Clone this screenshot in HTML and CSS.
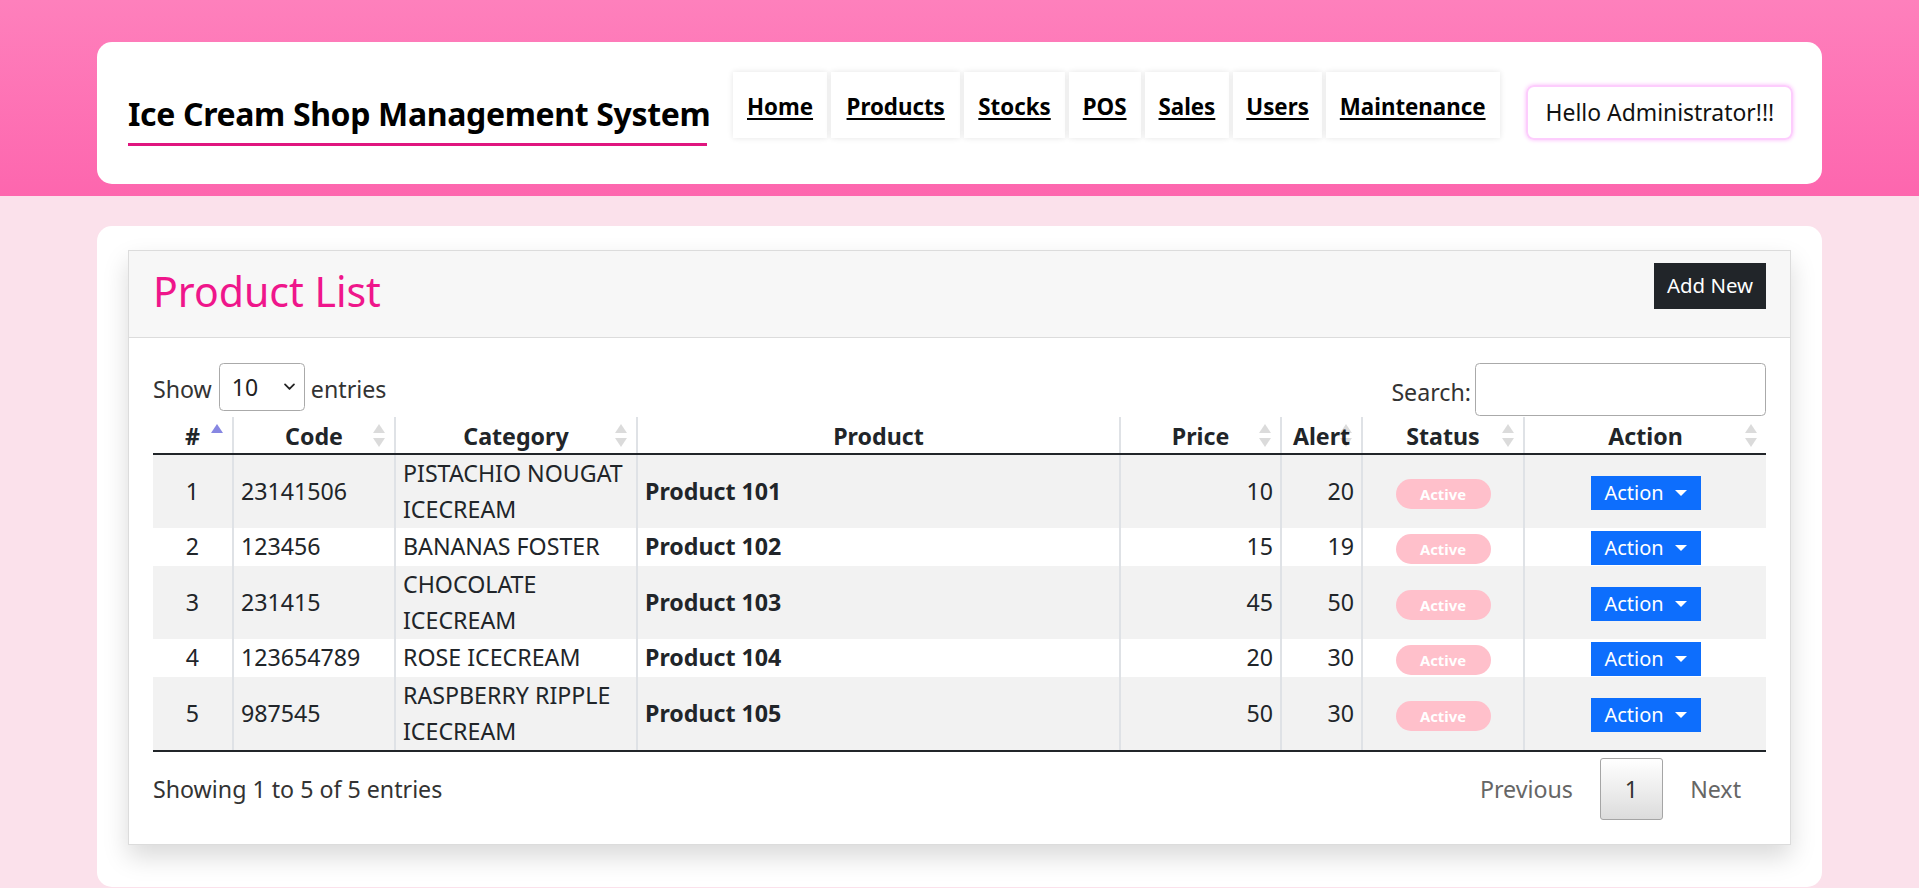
FILE: index.html
```html
<!DOCTYPE html>
<html lang="en">
<head>
<meta charset="utf-8">
<title>Ice Cream Shop Management System</title>
<link rel="stylesheet" href="styles.css">
</head>
<body>
<header class="topband">
  <div class="headcard">
    <div class="brand"><h1 class="brand-title">Ice Cream Shop Management System</h1></div>
    <nav class="mainnav">
      <a href="#">Home</a>
      <a href="#" class="nav-wide">Products</a>
      <a href="#">Stocks</a>
      <a href="#">POS</a>
      <a href="#">Sales</a>
      <a href="#" class="nav-narrow">Users</a>
      <a href="#">Maintenance</a>
    </nav>
    <div class="hello">Hello Administrator!!!</div>
  </div>
</header>

<main class="maincard">
  <section class="card">
    <div class="card-header">
      <h2 class="card-title">Product List</h2>
      <button class="btn-dark" type="button">Add New</button>
    </div>
    <div class="card-body">
      <div class="dt-top">
        <label class="dt-length"><span class="dt-text">Show</span>
          <span class="select-wrap">
            <select class="dt-select"><option>10</option><option>25</option><option>50</option><option>100</option></select>
            <svg class="chev" viewBox="0 0 16 16" width="13" height="13"><path d="M2.5 5.5 8 11l5.5-5.5" fill="none" stroke="#222" stroke-width="2.2" stroke-linecap="round" stroke-linejoin="round"/></svg>
          </span>
          <span class="dt-text">entries</span></label>
        <label class="dt-search"><span class="dt-text">Search:</span><input class="dt-input" type="search"></label>
      </div>

      <table class="dt-table">
        <colgroup>
          <col class="c-num"><col class="c-code"><col class="c-cat"><col class="c-prod">
          <col class="c-price"><col class="c-alert"><col class="c-status"><col class="c-action">
        </colgroup>
        <thead>
          <tr>
            <th class="sort sort-asc">#</th>
            <th class="sort">Code</th>
            <th class="sort">Category</th>
            <th>Product</th>
            <th class="sort">Price</th>
            <th class="sort">Alert</th>
            <th class="sort">Status</th>
            <th class="sort">Action</th>
          </tr>
        </thead>
        <tbody>
          <tr>
            <td class="t-center">1</td><td>23141506</td><td>PISTACHIO NOUGAT ICECREAM</td><td class="t-bold">Product 101</td>
            <td class="t-right">10</td><td class="t-right">20</td>
            <td class="t-center"><span class="badge">Active</span></td>
            <td class="t-center"><button class="btn-action" type="button">Action</button></td>
          </tr>
          <tr>
            <td class="t-center">2</td><td>123456</td><td>BANANAS FOSTER</td><td class="t-bold">Product 102</td>
            <td class="t-right">15</td><td class="t-right">19</td>
            <td class="t-center"><span class="badge">Active</span></td>
            <td class="t-center"><button class="btn-action" type="button">Action</button></td>
          </tr>
          <tr>
            <td class="t-center">3</td><td>231415</td><td>CHOCOLATE ICECREAM</td><td class="t-bold">Product 103</td>
            <td class="t-right">45</td><td class="t-right">50</td>
            <td class="t-center"><span class="badge">Active</span></td>
            <td class="t-center"><button class="btn-action" type="button">Action</button></td>
          </tr>
          <tr>
            <td class="t-center">4</td><td>123654789</td><td>ROSE ICECREAM</td><td class="t-bold">Product 104</td>
            <td class="t-right">20</td><td class="t-right">30</td>
            <td class="t-center"><span class="badge">Active</span></td>
            <td class="t-center"><button class="btn-action" type="button">Action</button></td>
          </tr>
          <tr>
            <td class="t-center">5</td><td>987545</td><td>RASPBERRY RIPPLE ICECREAM</td><td class="t-bold">Product 105</td>
            <td class="t-right">50</td><td class="t-right">30</td>
            <td class="t-center"><span class="badge">Active</span></td>
            <td class="t-center"><button class="btn-action" type="button">Action</button></td>
          </tr>
        </tbody>
      </table>

      <div class="dt-bottom">
        <div class="dt-info">Showing 1 to 5 of 5 entries</div>
        <div class="dt-paginate">
          <span class="pg-btn">Previous</span>
          <span class="pg-btn pg-current">1</span>
          <span class="pg-btn">Next</span>
        </div>
      </div>
    </div>
  </section>
</main>
</body>
</html>
```

FILE: styles.css
```css
* { box-sizing: border-box; }

body {
  margin: 0;
  background: #fbe1eb;
  font-family: "Noto Sans", "Open Sans", sans-serif;
  color: #212529;
  font-size: 23.2px;
  line-height: 36px;
}

/* ---------- top band ---------- */
.topband {
  background: linear-gradient(180deg, #fe80bc 0%, #fd66ae 100%);
  padding: 42px 97px 12px;
}

.headcard {
  height: 142px;
  background: #fff;
  border-radius: 15px;
  display: flex;
  align-items: flex-start;
  gap: 26px;
  padding: 30px 30px 0 31px;
}

.brand {
  margin-top: 20px;
  width: 579px;
  flex: none;
}

.brand-title {
  margin: 0;
  font-size: 32px;
  font-weight: 700;
  letter-spacing: -0.35px;
  line-height: 43px;
  color: #000;
  white-space: nowrap;
  padding-bottom: 8px;
  border-bottom: 3px solid #e0167f;
}

.mainnav {
  display: flex;
  gap: 4px;
  flex: none;
}

.mainnav a {
  display: block;
  background: #fff;
  box-shadow: 0 0 6px rgba(0, 0, 0, 0.11);
  padding: 17px 14px 13px;
  font-size: 22.3px;
  font-weight: 700;
  line-height: 36px;
  color: #000;
  text-decoration: underline;
  text-decoration-thickness: 2px;
  text-underline-offset: 3px;
}

.mainnav a.nav-wide { padding-left: 15.5px; padding-right: 15.5px; }
.mainnav a.nav-narrow { padding-left: 13px; padding-right: 13px; }

.hello {
  margin-top: 13px;
  margin-left: auto;
  flex: none;
  border: 2px solid #fdcdfd;
  border-radius: 8px;
  box-shadow: 0 0 4px #fbb9fb;
  padding: 8px 17px 7px 18px;
  font-size: 22.9px;
  line-height: 36px;
  color: #111;
  white-space: nowrap;
}

/* ---------- main card ---------- */
.maincard {
  margin: 30px 97px 0;
  background: #fff;
  border-radius: 15px;
  padding: 24px 31px 42px;
}

.card {
  background: #fff;
  border: 1px solid #dcdcdc;
  box-shadow: 0 12px 24px rgba(0, 0, 0, 0.15);
}

.card-header {
  height: 87px;
  background: #f7f7f7;
  border-bottom: 1px solid #dcdcdc;
  padding: 12px 24px;
  display: flex;
  justify-content: space-between;
  align-items: flex-start;
}

.card-title {
  margin: 0;
  font-size: 41px;
  font-weight: 400;
  line-height: 56px;
  color: #ef168b;
}

.btn-dark {
  font-family: inherit;
  font-size: 20.4px;
  line-height: 31.5px;
  padding: 6px 12px;
  background: #212529;
  color: #fff;
  border: 1px solid #212529;
  border-radius: 0;
}

.card-body {
  padding: 25px 24px 24px;
}

/* ---------- datatable controls ---------- */
.dt-top {
  display: flex;
  justify-content: space-between;
  align-items: flex-start;
  height: 54px;
}

.dt-length,
.dt-search {
  display: flex;
  align-items: center;
  color: #333;
}

.dt-text { padding-top: 4px; }

.dt-length { height: 48px; }
.dt-search { height: 53px; }

.select-wrap {
  position: relative;
  display: inline-block;
  margin: 0 6px 0 7px;
}

.dt-select {
  appearance: none;
  -webkit-appearance: none;
  width: 86px;
  height: 48px;
  border: 1px solid #aaa;
  border-radius: 4.5px;
  background: #fff;
  font-family: inherit;
  font-size: 23px;
  color: #222;
  padding: 0 0 0 12px;
  display: block;
}

.chev {
  position: absolute;
  right: 9px;
  top: 17px;
  pointer-events: none;
}

.dt-input {
  width: 291px;
  height: 53px;
  margin-left: 4px;
  border: 1px solid #aaa;
  border-radius: 4.5px;
  background: #fff;
  font-family: inherit;
  font-size: 23px;
}

/* ---------- table ---------- */
.dt-table {
  width: 100%;
  border-collapse: collapse;
  table-layout: fixed;
}

.c-num { width: 80px; }
.c-code { width: 162px; }
.c-cat { width: 242px; }
.c-prod { width: 483px; }
.c-price { width: 161px; }
.c-alert { width: 81px; }
.c-status { width: 162px; }
.c-action { width: 242px; }

.dt-table th {
  position: relative;
  font-weight: 700;
  text-align: center;
  line-height: 33px;
  padding: 3px 7px 0;
  border-bottom: 2px solid #212529;
  color: #212529;
  white-space: nowrap;
}

.dt-table th + th,
.dt-table td + td {
  border-left: 2px solid #dfe2e6;
}

.dt-table td {
  padding: 1px 7px;
  line-height: 35.5px;
  vertical-align: middle;
}

.dt-table tbody tr:nth-child(odd) td { background: #f2f2f2; }
.dt-table tbody tr:last-child td { border-bottom: 2px solid #212529; }

.t-center { text-align: center; }
.t-right { text-align: right; }
.t-bold { font-weight: 700; }

/* sort arrows */
.sort::before,
.sort::after {
  content: "";
  position: absolute;
  right: 9px;
  width: 0;
  height: 0;
  border-left: 6px solid transparent;
  border-right: 6px solid transparent;
}

.sort::before {
  top: 7px;
  border-bottom: 9px solid rgba(0, 0, 0, 0.14);
}

.sort::after {
  bottom: 6px;
  border-top: 9px solid rgba(0, 0, 0, 0.14);
}

.sort-asc::before { border-bottom-color: rgba(70, 70, 210, 0.65); }
.sort-asc::after { display: none; }

/* badge + action */
.badge {
  display: inline-block;
  width: 95px;
  height: 30px;
  border-radius: 15px;
  background: #ffc0cb;
  color: #fff;
  font-size: 14.8px;
  font-weight: 700;
  line-height: 30px;
  text-align: center;
}

.btn-action {
  display: inline-flex;
  align-items: center;
  justify-content: center;
  width: 110px;
  height: 34px;
  padding: 0 12px;
  background: #0d6efd;
  border: 1px solid #0d6efd;
  border-radius: 0;
  color: #fff;
  font-family: inherit;
  font-size: 20px;
  line-height: 32px;
}

.btn-action::after {
  content: "";
  margin-left: 11px;
  border-top: 6px solid #fff;
  border-left: 6px solid transparent;
  border-right: 6px solid transparent;
}

/* ---------- footer ---------- */
.dt-bottom {
  display: flex;
  justify-content: space-between;
  align-items: center;
  padding-top: 6px;
}

.dt-info { color: #333; }

.dt-paginate {
  display: flex;
  align-items: center;
}

.pg-btn {
  display: inline-block;
  padding: 12px 24px;
  line-height: 36px;
  border: 1px solid transparent;
  border-radius: 3px;
  color: #666;
  margin-left: 2px;
}

.pg-current {
  border-color: #a5a5a5;
  background: linear-gradient(180deg, #fff 0%, #dcdcdc 100%);
  color: #333;
}
```
